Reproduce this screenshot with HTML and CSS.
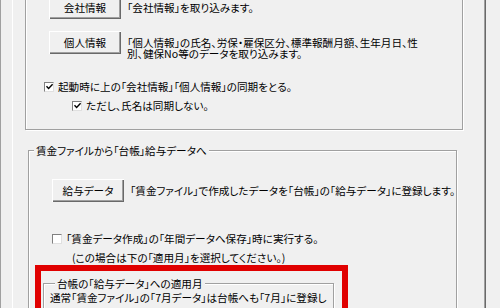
FILE: index.html
```html
<!DOCTYPE html>
<html>

<head>
    <meta charset="utf-8">
    <title>台帳連携</title>

    <link rel="stylesheet" href="styles.css">
</head>

<body>

    <div class="window">
        <div class="side"></div>
        <div class="page">

            <div class="group group_sync">
                <div class="row row_first">
                    <button class="btn">会社情報</button>
                    <div class="desc">「会社情報」を取り込みます。</div>
                </div>
                <div class="row row_top">
                    <button class="btn">個人情報</button>
                    <div class="desc desc_multi">
                        <div>「個人情報」の氏名、労保・雇保区分、標準報酬月額、生年月日、性</div>
                        <div>別、健保No等のデータを取り込みます。</div>
                    </div>
                </div>
                <label class="check check_sync">
                    <span class="box"><svg viewBox="0 0 9 9" width="9" height="9"><path d="M1.5 4.2 L3.6 6.4 L7.6 2.2" fill="none" stroke="#000" stroke-width="1.4"/></svg></span>
                    起動時に上の「会社情報」「個人情報」の同期をとる。
                </label>
                <label class="check check_name">
                    <span class="box"><svg viewBox="0 0 9 9" width="9" height="9"><path d="M1.5 4.2 L3.6 6.4 L7.6 2.2" fill="none" stroke="#000" stroke-width="1.4"/></svg></span>
                    ただし、氏名は同期しない。
                </label>
            </div>

            <div class="group group_wage">
                <div class="legend">賃金ファイルから「台帳」給与データへ</div>
                <div class="row row_wage">
                    <button class="btn">給与データ</button>
                    <div class="desc">「賃金ファイル」で作成したデータを「台帳」の「給与データ」に登録します。</div>
                </div>
                <label class="check check_year">
                    <span class="box"></span>
                    「賃金データ作成」の「年間データへ保存」時に実行する。
                </label>
                <div class="note">(この場合は下の「適用月」を選択してください。)</div>

                <div class="highlight">
                    <div class="group group_month">
                        <div class="legend legend_month">台帳の「給与データ」への適用月</div>
                        <p class="month_text">通常「賃金ファイル」の「7月データ」は台帳へも「7月」に登録します。</p>
                    </div>
                </div>
            </div>

        </div>
    </div>

</body>

</html>
```

FILE: styles.css
```css
* {
    box-sizing: border-box;
}

body {
    margin: 0;
    background-color: #F0F0F0;
    font-family: "Noto Sans CJK JP", sans-serif;
    font-size: 10.6px;
    font-feature-settings: "palt";
    color: #000000;
    overflow: hidden;
}

.window {
    display: flex;
    height: 308px;
    overflow: hidden;
}

.side {
    width: 12px;
    border-left: 1px solid #A0A0A0;
}

.page {
    width: 474px;
    border-left: 1px solid #FFFFFF;
    border-right: 1px solid #696969;
    box-shadow: inset -1px 0 #A0A0A0;
    padding-left: 12px;
}

/* etched group box */
.group {
    border: 1px solid #A0A0A0;
    box-shadow: inset 1px 1px #FFFFFF, 1px 1px #FFFFFF;
}

.legend {
    display: table;
    margin-top: -7px;
    margin-left: 5px;
    padding: 0 2px;
    line-height: 13px;
    background-color: #F0F0F0;
}

.group_sync {
    width: 438px;
    height: 134px;
    border-top: none;
    padding-left: 18px;
}

.row {
    display: flex;
    align-items: center;
    margin-left: 5px;
}

.row_first {
    margin-top: -4px;
}

.row_top {
    margin-top: 12px;
    align-items: flex-start;
}

.btn {
    width: 72px;
    height: 23px;
    padding: 0;
    border: none;
    background-color: #F0F0F0;
    box-shadow: inset 1px 1px #FFFFFF, inset -1px -1px #696969, inset -2px -2px #A0A0A0;
    font: inherit;
    color: #000000;
    flex-shrink: 0;
}

.desc {
    margin-left: 6px;
    line-height: 11px;
    white-space: nowrap;
}

.desc_multi {
    padding-top: 6px;
}

.check {
    display: flex;
    align-items: center;
    gap: 4px;
    height: 13px;
    white-space: nowrap;
}

.box {
    width: 10px;
    height: 10px;
    background-color: #FFFFFF;
    border: 1px solid #808080;
    border-right-color: #E0E0E0;
    border-bottom-color: #E0E0E0;
    display: flex;
    align-items: center;
    justify-content: center;
}

.box svg {
    flex-shrink: 0;
}

.check_sync {
    margin-top: 21px;
}

.check_name {
    margin-top: 6px;
    margin-left: 28px;
}

.group_wage {
    width: 429px;
    height: 170px;
    margin-top: 20px;
    margin-left: 3px;
}

.row_wage {
    margin-top: 22px;
    margin-left: 23px;
}

.check_year {
    margin-top: 30px;
    margin-left: 23px;
}

.note {
    margin-top: 6px;
    margin-left: 43px;
    line-height: 13px;
}

.highlight {
    width: 313px;
    height: 80px;
    margin-top: 1px;
    margin-left: 6px;
    border: 6px solid #E00000;
}

.group_month {
    width: 291px;
    height: 60px;
    margin-top: 12px;
    margin-left: 2px;
}

.legend_month {
    margin-left: 11px;
}

.month_text {
    margin: 0 0 0 6px;
    line-height: 15px;
}
```
